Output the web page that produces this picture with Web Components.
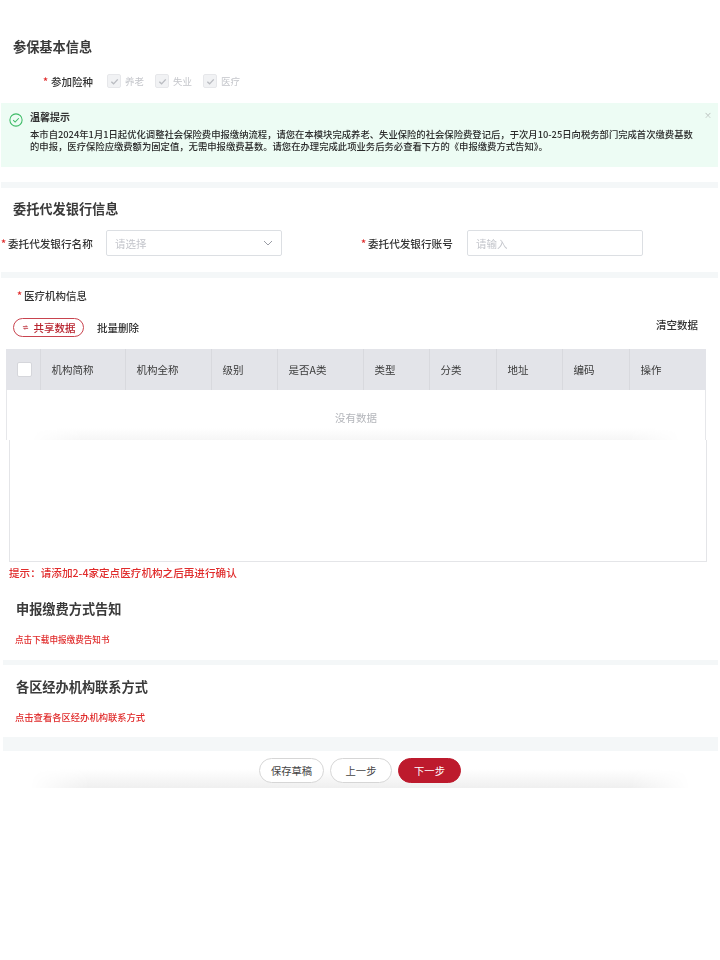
<!DOCTYPE html>
<html lang="zh-CN">
<head>
<meta charset="utf-8">
<title>参保基本信息</title>
<style>
  html, body { margin: 0; background: #fff; }
  body { font-family: "Noto Sans CJK SC", "Liberation Sans", sans-serif; color: #333; }
</style>
</head>
<body>
<ss-page>
  <ss-title style="--top:37px;--left:13px">参保基本信息</ss-title>
  <ss-insurance></ss-insurance>
  <ss-alert heading="温馨提示">本市自2024年1月1日起优化调整社会保险费申报缴纳流程，请您在本模块完成养老、失业保险的社会保险费登记后，于次月10-25日向税务部门完成首次缴费基数的申报，医疗保险应缴费额为固定值，无需申报缴费基数。请您在办理完成此项业务后务必查看下方的《申报缴费方式告知》。</ss-alert>
  <ss-band style="--top:15px;--h:6px;--left:1px"></ss-band>
  <ss-title style="--top:11px;--left:13px">委托代发银行信息</ss-title>
  <ss-bank></ss-bank>
  <ss-band style="--top:16px;--h:6px;--left:1px"></ss-band>
  <ss-institutions></ss-institutions>
  <ss-title style="--top:19px;--left:16px">申报缴费方式告知</ss-title>
  <ss-link style="--top:14px;--size:8.6px">点击下载申报缴费告知书</ss-link>
  <ss-band style="--top:15px;--h:5px;--left:3px"></ss-band>
  <ss-title style="--top:12px;--left:16px">各区经办机构联系方式</ss-title>
  <ss-link style="--top:14px;--size:9.3px">点击查看各区经办机构联系方式</ss-link>
  <ss-band style="--top:14px;--h:14px;--left:3px"></ss-band>
  <ss-footer></ss-footer>
</ss-page>

<script>
(function(){
    // small helper, every element here is just a template + open shadow root
    function define(name, html, setup) {
        const template = document.createElement('template');
        template.innerHTML = html;
        customElements.define(name, class extends HTMLElement {
            constructor() {
                super();
                this.attachShadow({mode: 'open'}).appendChild(template.content.cloneNode(true));
            }
            connectedCallback() {
                if (setup) setup(this, this.shadowRoot);
            }
        });
    }

    define('ss-page', `
        <style>
            :host { display: block; width: 720px; min-height: 960px; font-family: "Noto Sans CJK SC", "Liberation Sans", sans-serif; filter: blur(.4px); }
        </style>
        <slot></slot>
    `);

    define('ss-title', `
        <style>
            :host {
                display: block;
                margin: var(--top, 0) 0 0 var(--left, 13px);
                height: 20px;
                line-height: 20px;
                font-size: 13.2px;
                font-weight: 700;
                color: #3a3a3a;
                white-space: nowrap;
            }
        </style>
        <slot></slot>
    `);

    define('ss-band', `
        <style>
            :host {
                display: block;
                margin: var(--top, 0) 2px 0 var(--left, 1px);
                height: var(--h, 6px);
                background: #f4f7f8;
            }
        </style>
    `);

    define('ss-link', `
        <style>
            :host {
                display: block;
                margin: var(--top, 0) 0 0 15px;
                height: 12px;
                line-height: 12px;
                font-size: var(--size, 9px);
                font-weight: 500;
                color: #e02b2b;
                white-space: nowrap;
            }
        </style>
        <slot></slot>
    `);

    define('ss-check', `
        <style>
            :host { display: flex; align-items: center; gap: 4px; font-size: 9.5px; font-weight: 400; color: #c4c6cb; width: 48px; }
            .box {
                width: 12px; height: 12px;
                border: 1px solid #e6e7ea; border-radius: 2px;
                background: #f1f2f4;
                display: flex; align-items: center; justify-content: center;
            }
            svg { width: 9px; height: 9px; }
        </style>
        <span class="box"><svg viewBox="0 0 10 10"><path d="M1.5 5.2 4 7.6 8.6 2.6" fill="none" stroke="#b9bbc0" stroke-width="1.5"/></svg></span>
        <slot></slot>
    `);

    define('ss-insurance', `
        <style>
            :host {
                display: flex; align-items: center;
                height: 20px; margin: 14px 0 12px 43px;
                font-size: 10.5px; font-weight: 500; color: #333;
            }
            .star { color: #e02b2b; width: 8px; }
            .label { width: 56px; }
        </style>
        <span class="star">*</span><span class="label">参加险种</span>
        <ss-check>养老</ss-check><ss-check>失业</ss-check><ss-check>医疗</ss-check>
    `);

    define('ss-alert', `
        <style>
            :host {
                display: flex; gap: 7px;
                position: relative;
                margin: 0 2px 0 1px;
                height: 64px; box-sizing: border-box;
                padding: 6px 24px 0 8px;
                background: #edfcf4;
                color: #333;
            }
            svg { width: 14px; height: 14px; margin-top: 4px; flex: none; }
            .head { font-size: 10px; font-weight: 700; line-height: 15px; color: #333; }
            .body { font-size: 9.33px; font-weight: 500; line-height: 12px; margin-top: 4px; color: #2a2a2a; width: 666px; }
            .close { position: absolute; right: 6px; top: 6px; font-size: 8px; line-height: 12px; color: #b5bbb8; }
        </style>
        <svg viewBox="0 0 16 16">
            <circle cx="8" cy="8" r="7" fill="none" stroke="#3dbb66" stroke-width="1.2"/>
            <path d="M4.8 8.2 7 10.3 11.2 6" fill="none" stroke="#3dbb66" stroke-width="1.2"/>
        </svg>
        <div>
            <div class="head"></div>
            <div class="body"><slot></slot></div>
        </div>
        <span class="close">×</span>
    `, (el, root) => {
        root.querySelector('.head').textContent = el.getAttribute('heading');
    });

    define('ss-field', `
        <style>
            :host { display: flex; align-items: center; font-size: 10.6px; font-weight: 500; color: #333; }
            .star { color: #e02b2b; width: 7px; flex: none; }
            .label { width: var(--label, 98px); flex: none; white-space: nowrap; }
            .box {
                width: 176px; height: 26px; box-sizing: border-box;
                border: 1px solid #dcdfe3; border-radius: 2px;
                padding: 0 8px;
                display: flex; align-items: center; justify-content: space-between;
                color: #c3c5cb; font-size: 10.5px; font-weight: 400;
            }
            svg { width: 10px; height: 10px; display: none; }
            :host([select]) svg { display: block; }
        </style>
        <span class="star">*</span><span class="label"></span>
        <div class="box"><span class="ph"></span><svg viewBox="0 0 10 10"><path d="M1 3 5 7 9 3" fill="none" stroke="#9a9da5" stroke-width="1"/></svg></div>
    `, (el, root) => {
        root.querySelector('.label').textContent = el.getAttribute('label');
        root.querySelector('.ph').textContent = el.getAttribute('placeholder');
    });

    define('ss-bank', `
        <style>
            :host { display: flex; gap: 79px; margin: 11px 0 0 1px; height: 26px; }
        </style>
        <ss-field select label="委托代发银行名称" placeholder="请选择"></ss-field>
        <ss-field style="--label:99px" label="委托代发银行账号" placeholder="请输入"></ss-field>
    `);

    define('ss-table', `
        <style>
            :host { display: block; margin: 0 0 0 6px; width: 700px; font-size: 10.5px; font-weight: 400; color: #3a3a3a; }
            .head {
                display: grid;
                grid-template-columns: 34px 85px 86px 66px 86px 66px 67px 66px 67px 76px;
                height: 41px; background: #e3e4e9;
            }
            .head > div {
                display: flex; align-items: center;
                padding-left: 10.5px;
                border-left: 1px solid #d8d9de;
                box-sizing: border-box;
            }
            .head > div:first-child { border-left: 0; padding-left: 11px; }
            .tick { width: 13px; height: 13px; background: #fff; border: 1px solid #d5d6db; border-radius: 2px; }
            .empty {
                position: relative;
                height: 50px; box-sizing: border-box;
                border: solid #e6e7ea; border-width: 0 1px;
                padding-top: 21px; line-height: 14px;
                text-align: center; color: #b4b6bb;
            }
            .fade {
                position: absolute; left: 24px; right: 24px; bottom: 0; height: 12px;
                background: linear-gradient(#fff, #f6f6f6);
                -webkit-mask-image: linear-gradient(90deg, transparent, #000 8%, #000 92%, transparent);
                mask-image: linear-gradient(90deg, transparent, #000 8%, #000 92%, transparent);
            }
            .rest {
                margin-left: 3px; width: 698px; height: 122px; box-sizing: border-box;
                border: solid #e4e5e8; border-width: 0 1px 1px;
            }
        </style>
        <div class="head">
            <div><span class="tick"></span></div>
            <div>机构简称</div><div>机构全称</div><div>级别</div><div>是否A类</div>
            <div>类型</div><div>分类</div><div>地址</div><div>编码</div><div>操作</div>
        </div>
        <div class="empty"><div class="fade"></div>没有数据</div>
        <div class="rest"></div>
    `);

    define('ss-institutions', `
        <style>
            :host { display: block; font-size: 10.5px; font-weight: 500; color: #333; }
            .title { margin: 10px 0 0 17px; height: 16px; line-height: 16px; display: flex; }
            .star { color: #e02b2b; width: 7px; }
            .tools { display: flex; align-items: center; margin: 14px 22px 0 13px; height: 19px; }
            .pill {
                width: 71px; height: 19px; box-sizing: border-box;
                border: 1px solid #c8434e; border-radius: 10px;
                color: #b8242f;
                display: flex; align-items: center; justify-content: center; gap: 5px;
            }
            .pill svg { width: 7px; height: 7px; }
            .del { margin-left: 13px; }
            .clear { margin-left: auto; position: relative; top: -3px; }
            .hint { margin: 4px 0 0 9px; height: 14px; line-height: 14px; color: #e02b2b; font-size: 10.6px; white-space: nowrap; }
            ss-table { margin-top: 12px; }
        </style>
        <div class="title"><span class="star">*</span>医疗机构信息</div>
        <div class="tools">
            <div class="pill"><svg viewBox="0 0 8 8"><path d="M1 3H6L4.6 1.6M7 5H2L3.4 6.4" fill="none" stroke="#b8242f" stroke-width=".9"/></svg>共享数据</div>
            <span class="del">批量删除</span>
            <span class="clear">清空数据</span>
        </div>
        <ss-table></ss-table>
        <div class="hint">提示：请添加2-4家定点医疗机构之后再进行确认</div>
    `);

    define('ss-button', `
        <style>
            :host {
                display: flex; align-items: center; justify-content: center;
                height: 25px; box-sizing: border-box;
                border: 1px solid #d6d6d6; border-radius: 13px;
                background: #fff; color: #444; font-size: 10.3px; font-weight: 400;
            }
            :host([primary]) { background: #bd1a2d; border-color: #bd1a2d; color: #fff; }
        </style>
        <slot></slot>
    `);

    define('ss-footer', `
        <style>
            :host {
                display: flex; justify-content: center; gap: 6px;
                height: 37px; box-sizing: border-box; padding-top: 7px;
                position: relative;
            }
            .shade {
                position: absolute; left: 30px; right: 30px; top: 18px; bottom: 0;
                background: linear-gradient(#fff, #efefef);
                -webkit-mask-image: linear-gradient(90deg, transparent, #000 9%, #000 91%, transparent);
                mask-image: linear-gradient(90deg, transparent, #000 9%, #000 91%, transparent);
            }
            ss-button { position: relative; }
            ss-button:nth-of-type(1) { width: 65px; }
            ss-button:nth-of-type(2) { width: 62px; }
            ss-button:nth-of-type(3) { width: 63px; }
        </style>
        <div class="shade"></div>
        <ss-button>保存草稿</ss-button>
        <ss-button>上一步</ss-button>
        <ss-button primary>下一步</ss-button>
    `);
})();
</script>
</body>
</html>
